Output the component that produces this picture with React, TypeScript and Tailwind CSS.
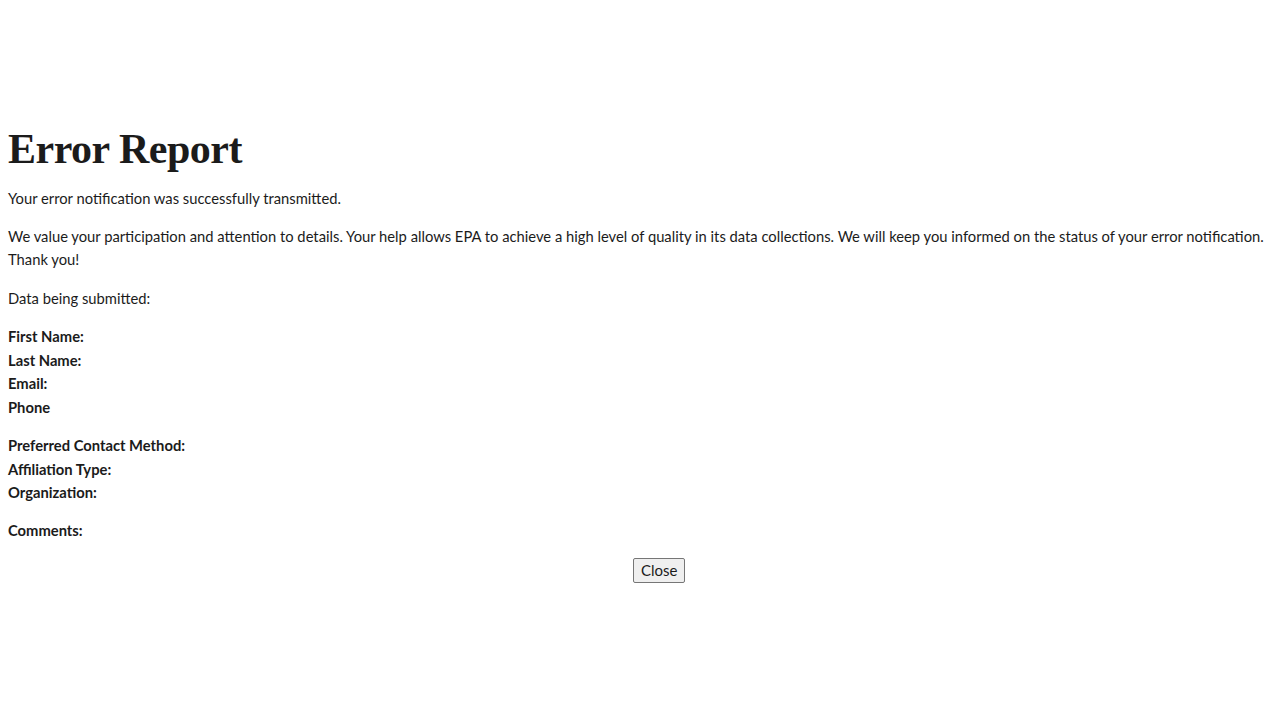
export default function App() {
  const contact = ["First Name:", "Last Name:", "Email:", "Phone"]
  const org = ["Preferred Contact Method:", "Affiliation Type:", "Organization:"]

  return (
    <div className="min-h-screen bg-white text-[#1b1b1b] [font-family:Lato,'Open_Sans',sans-serif] text-[14.75px] leading-[23px]">
      <div className="px-2 pt-[125px]">
        <h1 className="[font-family:'Liberation_Serif',serif] font-bold text-[42px] leading-[48px] tracking-[-0.5px] mb-[14px]">
          Error Report
        </h1>
        <p className="mb-[15px]">Your error notification was successfully transmitted.</p>
        <p className="mb-[16px]">
          We value your participation and attention to details. Your help allows EPA to achieve a high level of quality in its data
          collections. We will keep you informed on the status of your error notification. Thank you!
        </p>
        <p className="mb-[15px]">Data being submitted:</p>

        <div className="font-bold leading-[23.7px] mb-[14px]">
          {contact.map((label) => (
            <div key={label}>{label}</div>
          ))}
        </div>
        <div className="font-bold leading-[23.7px] mb-[14px]">
          {org.map((label) => (
            <div key={label}>{label}</div>
          ))}
        </div>
        <div className="font-bold leading-[23.7px]">Comments:</div>

        <div className="flex pl-[625px] mt-[15px]">
          <button className="h-[25px] px-[7px] text-[15px] leading-[20px] bg-[#efefef] border border-[#767676] rounded-[2px] text-[#1b1b1b]">
            Close
          </button>
        </div>
      </div>
    </div>
  )
}
